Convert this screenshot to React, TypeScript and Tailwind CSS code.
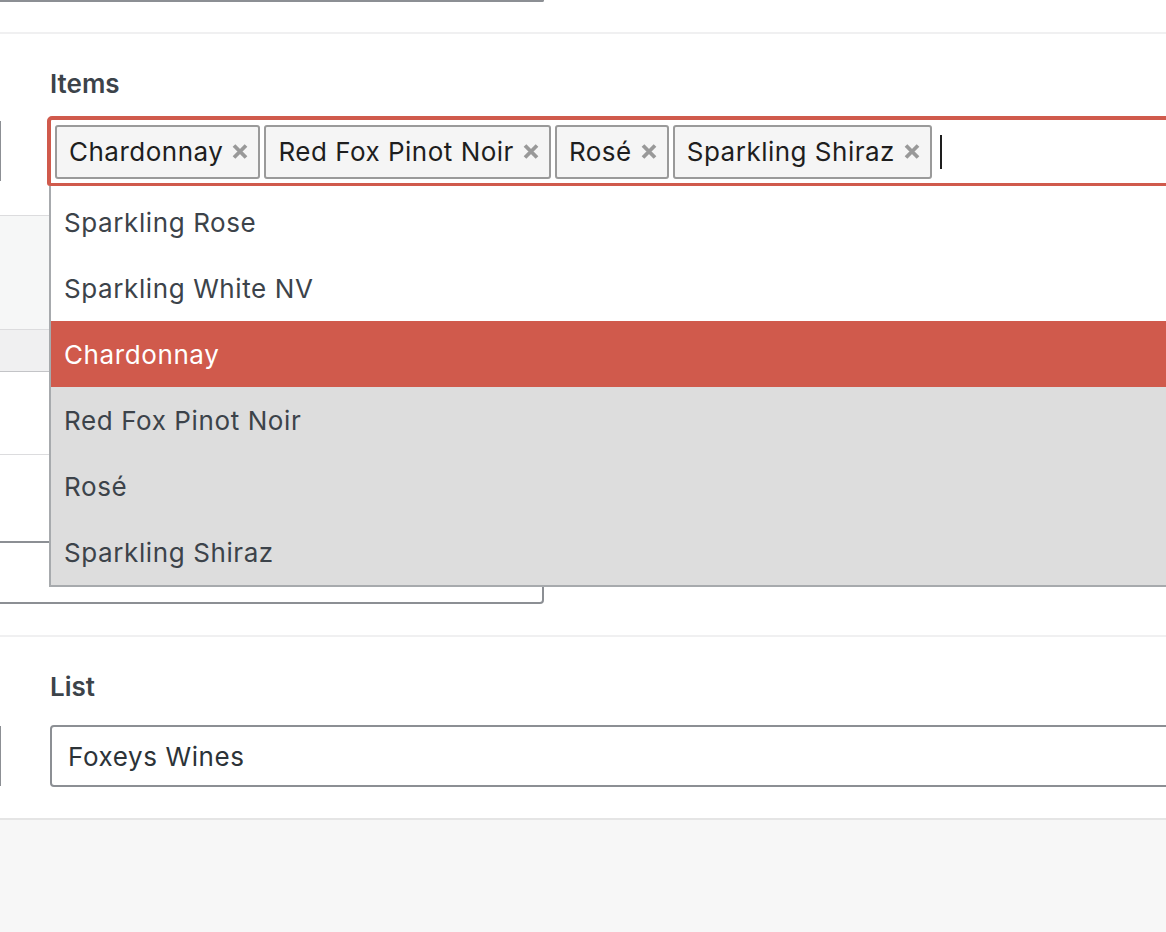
const SELECTED = ['Chardonnay', 'Red Fox Pinot Noir', 'Rosé', 'Sparkling Shiraz'];

const OPTIONS = [
  { label: 'Sparkling Rose', state: 'idle' },
  { label: 'Sparkling White NV', state: 'idle' },
  { label: 'Chardonnay', state: 'active' },
  { label: 'Red Fox Pinot Noir', state: 'chosen' },
  { label: 'Rosé', state: 'chosen' },
  { label: 'Sparkling Shiraz', state: 'chosen' },
];

function RemoveIcon() {
  return (
    <svg className="w-[16px] h-[15px] ml-[9px] shrink-0" viewBox="0 0 16 15" fill="none">
      <path d="M2 1.5L14 13.5M14 1.5L2 13.5" stroke="#999999" strokeWidth={3.8} />
    </svg>
  );
}

function Tag({ label }: { label: string }) {
  return (
    <span className="flex items-center h-[54px] shrink-0 pl-3 pr-[10px] border-2 border-[#9a9a9a] bg-[#f5f5f5] rounded-[3px] text-[26px] tracking-[0.5px] text-[#1e1e1e] whitespace-nowrap">
      {label}
      <RemoveIcon />
    </span>
  );
}

export default function App() {
  return (
    <div className="w-[1166px] h-[932px] overflow-hidden bg-[#f7f7f7] font-['Inter','Liberation_Sans',sans-serif]">
      <div className="bg-white">

        {/* tail of the field above */}
        <div className="h-[34px] border-b-2 border-[#f0f0f1]">
          <div className="w-[544px] h-[2px] border-b-2 border-r-2 border-[#8c8f94] rounded-br-[3px]" />
        </div>

        {/* Items */}
        <section className="pt-[34px] border-b-2 border-[#f0f0f1]">
          <label className="block pl-[50px] text-[26px] leading-[32px] font-semibold text-[#3c434a]">Items</label>

          <div className="mt-[16px] flex items-center">
            <div className="w-px h-[60px] bg-[#8c8f94] shrink-0" />
            <div className="relative ml-[46px] w-[1200px] shrink-0">
              <div className="h-[70px] flex items-center gap-[4px] pl-1 bg-white border-[3px] border-t-4 border-l-4 border-[#d05a4c] rounded-t-[5px] rounded-bl-[3px]">
                {SELECTED.map(s => <Tag key={s} label={s} />)}
                <span className="ml-[4px] w-[2px] h-[34px] bg-[#1e1e1e]" />
              </div>

              {/* open dropdown */}
              <ul className="absolute top-full left-[2px] right-0 z-10 bg-white pt-[3px] border-l-2 border-b-2 border-[#a7aaad]">
                {OPTIONS.map(o => (
                  <li
                    key={o.label}
                    className={`h-[66px] flex items-center pl-[13px] text-[26px] tracking-[0.6px] ${
                      o.state === 'active'
                        ? 'bg-[#d05a4c] text-white'
                        : o.state === 'chosen'
                          ? 'bg-[#dddddd] text-[#3c434a]'
                          : 'text-[#3c434a]'
                    }`}
                  >
                    {o.label}
                  </li>
                ))}
              </ul>
            </div>
          </div>

          {/* content underneath the dropdown */}
          <div className="w-[544px]">
            <div className="h-[29px]" />
            <div className="h-[115px] bg-[#f6f7f7] border-y border-[#dcdcde]" />
            <div className="h-[42px] bg-[#f0f0f1] border-b border-[#c3c4c7]" />
            <div className="h-[83px] border-b border-[#dcdcde]" />
            <div className="h-[86px]" />
            <div className="h-[63px] border-2 border-l-0 border-[#8c8f94] rounded-r-[4px]" />
            <div className="h-[31px]" />
          </div>
        </section>

        {/* List */}
        <section className="pt-[34px] pb-[31px] border-b-2 border-[#e5e5e5]">
          <label className="block pl-[50px] text-[26px] leading-[32px] font-semibold text-[#3c434a]">List</label>
          <div className="mt-[22px] flex items-center">
            <div className="w-px h-[60px] bg-[#8c8f94] shrink-0" />
            <div className="ml-[49px] w-[1200px] shrink-0 h-[62px] flex items-center pl-4 border-2 border-[#8c8f94] rounded-[4px] text-[26px] tracking-[0.6px] text-[#2c3338]">
              Foxeys Wines
            </div>
          </div>
        </section>

      </div>
    </div>
  );
}
